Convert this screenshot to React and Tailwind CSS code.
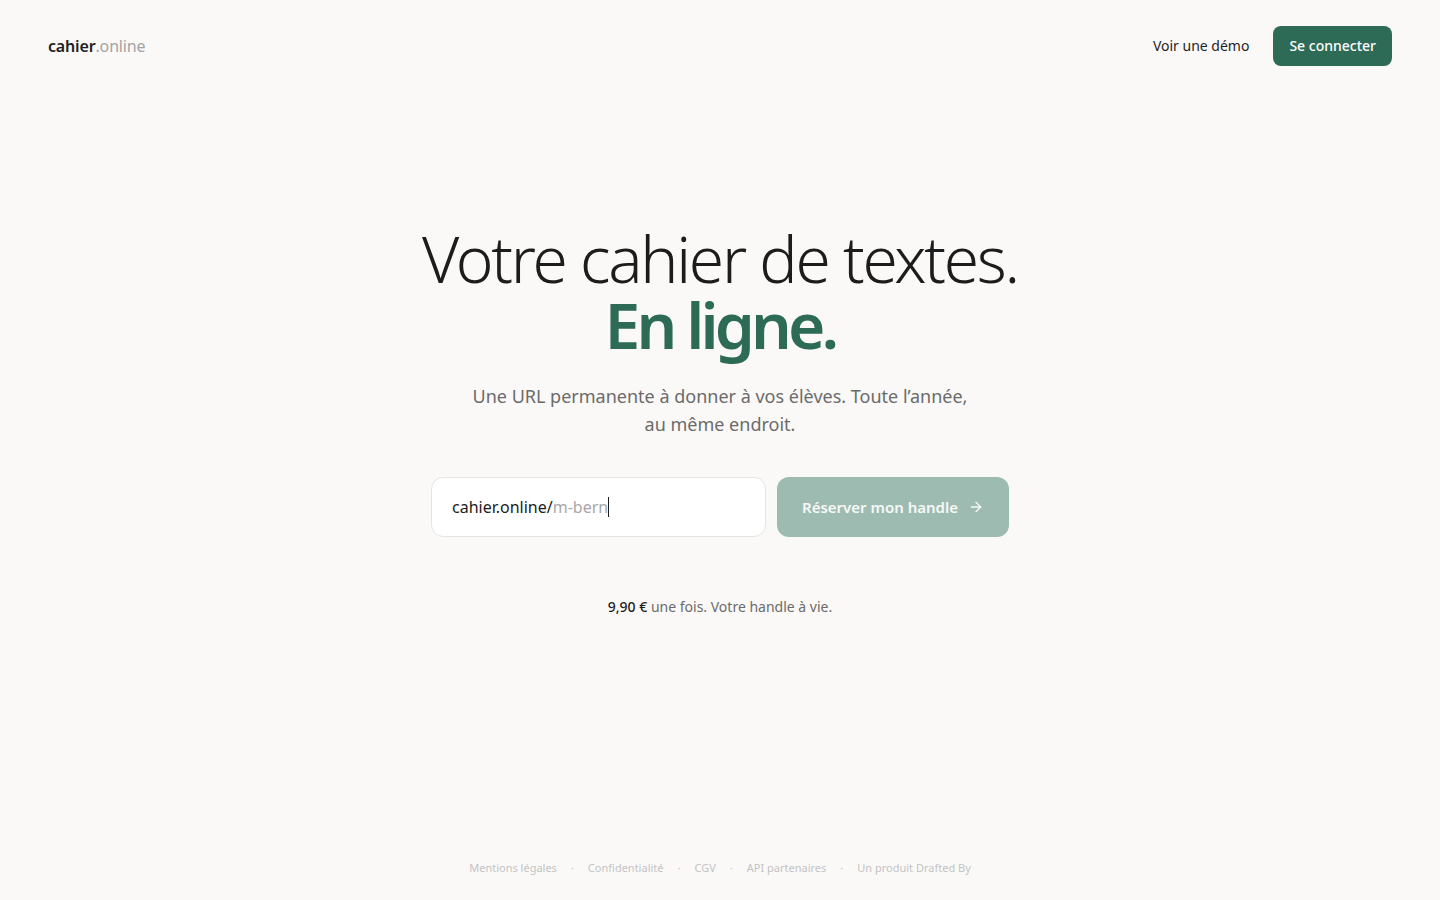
import { ArrowRight } from 'lucide-react';

const font = { fontFamily: '"Noto Sans", Inter, sans-serif' };

export default function App() {
  return (
    <div
      className="min-h-screen flex flex-col bg-[#faf9f7] text-[#1c1c1c]"
      style={font}
    >
      <header className="flex items-center justify-between px-12 pt-[26px]">
        <a className="text-base tracking-[-0.01em]">
          <span className="font-semibold text-[#1f1f1f]">cahier</span>
          <span className="text-[#a3a3a3]">.online</span>
        </a>
        <nav className="flex items-center gap-6">
          <a className="text-sm text-[#1f1f1f]">Voir une démo</a>
          <button className="h-10 px-4 rounded-lg bg-[#2d6b56] text-white text-sm font-medium">
            Se connecter
          </button>
        </nav>
      </header>

      <main className="flex flex-col items-center pt-[160px]">
        <h1 className="text-center leading-[66px]">
          <span className="block text-[64px] font-light tracking-[-0.035em] text-[#1c1c1c]">
            Votre cahier de textes.
          </span>
          <span className="block text-[64px] font-semibold tracking-[-0.06em] text-[#2d6b56]">
            En ligne.
          </span>
        </h1>
        <p className="mt-6 text-center text-lg leading-7 text-[#6b6b6b] max-w-[520px]">
          Une URL permanente à donner à vos élèves. Toute l’année, au même endroit.
        </p>

        <form className="mt-[39px] flex gap-[11px]">
          <div className="w-[335px] h-[60px] flex items-center px-5 rounded-xl border border-[#e6e4df] bg-white text-base">
            <span className="text-[#1c1c1c]">cahier.online/</span>
            <span className="text-[#a8a8a8]">m-bern</span>
            <span className="w-px h-5 bg-[#1c1c1c]" />
          </div>
          <button
            type="button"
            className="w-[232px] h-[60px] flex items-center justify-center gap-2.5 rounded-xl bg-[#9dbbb0] text-white/90 text-[15px] font-semibold"
          >
            Réserver mon handle
            <ArrowRight className="w-4 h-4" strokeWidth={2} />
          </button>
        </form>

        <p className="mt-[60px] text-sm text-[#6b6b6b]">
          <span className="font-medium text-[#1c1c1c]">9,90 €</span> une fois. Votre handle à vie.
        </p>
      </main>

      <footer className="mt-auto pb-6 flex justify-center items-center gap-3.5 text-[11px] text-[#c4c4c4]">
        <a>Mentions légales</a>
        <span>·</span>
        <a>Confidentialité</a>
        <span>·</span>
        <a>CGV</a>
        <span>·</span>
        <a>API partenaires</a>
        <span>·</span>
        <a>Un produit Drafted By</a>
      </footer>
    </div>
  );
}
